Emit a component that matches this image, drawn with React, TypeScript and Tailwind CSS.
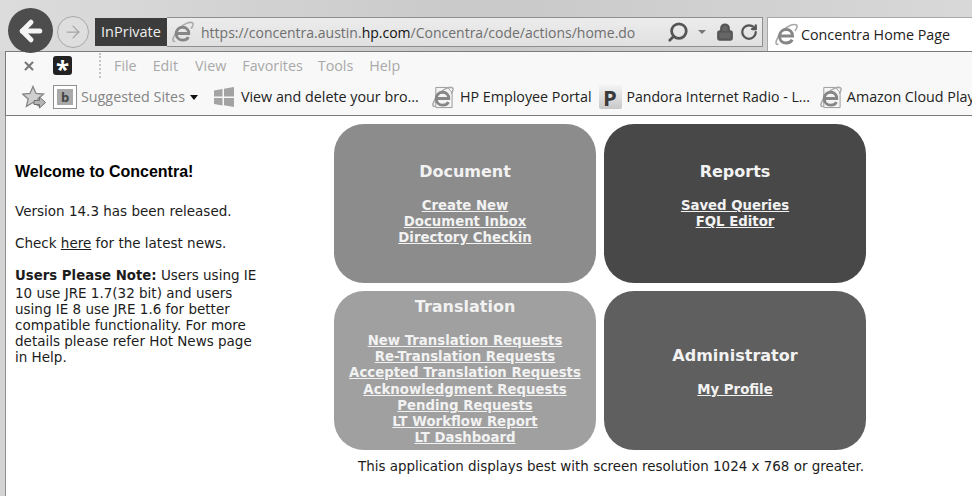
import { ArrowLeft, ArrowRight, Lock, RotateCw, Search, X } from 'lucide-react';

const chromeFont = "font-['Open_Sans','Noto_Sans',sans-serif]";
const pageFont = "font-['DejaVu_Sans',sans-serif]";

function IeIcon({ size = 24, page = false }: { size?: number; page?: boolean }) {
  return (
    <svg width={size} height={size} viewBox="0 0 24 24" fill="none" className="shrink-0">
      {page && <path d="M5 1.500h12l5 5v16H5z" fill="#f4f4f4" stroke="#9a9a9a" />}
      <path d="M4.500 21C0 23 2 15 8 8.500S20 .5 22.500 2c1.500 1-.5 4.500-1.500 6" stroke="#a9a9a9" strokeWidth="1.600" />
      <path
        d="M6 13h12.500c.2-4-2.700-6.500-6.200-6.500-4 0-6.800 3-6.800 6.800s2.800 6.700 6.800 6.700c2.700 0 4.800-1.100 5.900-3.200"
        stroke="#868686"
        strokeWidth="3"
      />
    </svg>
  );
}

function WindowsIcon() {
  return (
    <svg width="20" height="20" viewBox="0 0 20 20" fill="#a3a3a3" className="shrink-0">
      <path d="M0 3.500l8.500-1.500v7.500H0zM10 1.700L20 0v9.500H10zM0 11h8.500v7.500L0 17zM10 11h10v9l-10-1.700z" />
    </svg>
  );
}

function FavoritesIcon() {
  return (
    <svg width="24" height="24" viewBox="0 0 24 24" className="shrink-0">
      <path
        d="M11 1.500l3 7 7.500.6-5.700 4.900 1.800 7.400L11 17.500l-6.600 3.900 1.800-7.400L.5 9.100 8 8.500z"
        fill="#d0d0d0"
        stroke="#858585"
        strokeWidth="1.300"
      />
      <path d="M12 15.500h5.500V12l6 5.500-6 5.500v-3.500H12z" fill="#b5b5b5" stroke="#6f6f6f" />
    </svg>
  );
}

function Card({ title, links, bg, pad }: { title: string; links: string[]; bg: string; pad: string }) {
  return (
    <div className={`h-[159px] rounded-[30px] flex flex-col items-center text-[#f2f2f2] ${bg} ${pad}`}>
      <h2 className="h-6 leading-6 text-[16px] font-bold mb-3.5">{title}</h2>
      {links.map((link) => (
        <a key={link} className="h-[16.200px] leading-[16px] text-[13.300px] font-bold underline whitespace-nowrap">
          {link}
        </a>
      ))}
    </div>
  );
}

export default function App() {
  return (
    <div className="w-[972px] h-[496px] overflow-hidden bg-[#d4d4d4]">
      {/* Browser frame */}
      <div className={`h-[51px] flex bg-gradient-to-r from-[#dcdcdc] via-[#c9c9c9] to-[#d8d8d8] ${chromeFont}`}>
        <div className="ml-[8px] mt-[8px] w-[45px] h-[45px] rounded-full bg-[#4d4d4d] flex items-center justify-center relative z-10">
          <ArrowLeft size={30} strokeWidth={4} color="#f5f5f5" />
        </div>
        <div className="ml-[4px] mt-[16px] w-[32px] h-[32px] rounded-full border border-[#a8a8a8] bg-[#dedede] flex items-center justify-center">
          <ArrowRight size={20} strokeWidth={1.500} color="#a5a5a5" />
        </div>
        <div className="ml-[6px] mt-[18px] w-[72px] h-[28px] bg-[#3c3c3c] text-[#eeeeee] text-[14.500px] leading-[28px] text-center">
          InPrivate
        </div>
        <div className="mt-[17px] w-[596px] h-[30px] border border-l-0 border-[#8f8f8f] bg-gradient-to-b from-[#ececec] to-[#e0e0e0] flex items-center pl-[4px]">
          <IeIcon size={23} />
          <span className="ml-[7px] text-[14px] text-[#6f6f6f] whitespace-nowrap">
            https://concentra.austin.<span className="text-[#111111]">hp.com</span>/Concentra/code/actions/home.do
          </span>
          <div className="ml-auto flex items-center mr-[4px] text-[#555555]">
            <Search size={22} strokeWidth={3} className="-scale-x-100" />
            <span className="ml-[9px] border-x-[4px] border-t-[4px] border-x-transparent border-t-[#777777]" />
            <Lock size={18} strokeWidth={3} fill="#666666" className="ml-[10px]" />
            <RotateCw size={18} strokeWidth={3} className="ml-[6px]" />
          </div>
        </div>
        <div className="ml-[4px] mt-[17px] flex-1 h-[34px] bg-white border-l border-t border-[#a8a8a8] flex items-center pl-[6px] text-[14.300px] text-[#222222] whitespace-nowrap">
          <IeIcon size={24} />
          <span className="ml-[3px]">Concentra Home Page</span>
        </div>
      </div>

      <div className={`h-[65px] ml-[5px] border-y border-[#7b7b7b] border-l bg-[#f8f8f8] ${chromeFont}`}>
        <div className="h-[27px] flex items-center text-[14.300px] text-[#a9a9a9]">
          <X size={14} strokeWidth={3.500} color="#777777" className="ml-[16px]" />
          <span className="ml-[17px] w-[19px] h-[19px] rounded-[3px] bg-[#222222] text-white text-[24px] leading-[26px] text-center font-bold">
            *
          </span>
          <span className="ml-[27px] h-[25px] border-l-2 border-dotted border-[#c4c4c4]" />
          <span className="ml-[13px]">File</span>
          <span className="ml-[16px]">Edit</span>
          <span className="ml-[17px]">View</span>
          <span className="ml-[16px]">Favorites</span>
          <span className="ml-[15px]">Tools</span>
          <span className="ml-[16px]">Help</span>
        </div>
        <div className="h-[36px] flex items-center text-[14.300px] text-[#222222] whitespace-nowrap overflow-hidden">
          <span className="ml-[16px]"><FavoritesIcon /></span>
          <span className="ml-[7px] w-[24px] h-[24px] border border-[#8f8f8f] bg-white flex items-center justify-center shrink-0">
            <span className="w-[16px] h-[16px] bg-[#a9a9a9] text-[#444444] text-[13px] leading-[16px] font-bold text-center">b</span>
          </span>
          <span className="ml-[4px] text-[#858585]">Suggested Sites</span>
          <span className="ml-[5px] border-x-[4px] border-t-[5px] border-x-transparent border-t-[#111111]" />
          <span className="ml-[16px]"><WindowsIcon /></span>
          <span className="ml-[7px]">View and delete your bro...</span>
          <span className="ml-[12px]"><IeIcon size={23} page /></span>
          <span className="ml-[6px]">HP Employee Portal</span>
          <span className="ml-[7px] w-[23px] h-[24px] rounded-[2px] bg-gradient-to-b from-[#f4f4f4] to-[#c8c8c8] text-[#3a3a3a] text-[22px] leading-[24px] font-bold text-center shrink-0">
            P
          </span>
          <span className="ml-[5px] text-[14.100px]">Pandora Internet Radio - L...</span>
          <span className="ml-[9px]"><IeIcon size={23} page /></span>
          <span className="ml-[5px]">Amazon Cloud Player</span>
        </div>
      </div>

      {/* Page */}
      <div className={`ml-[5px] h-[380px] bg-white border-l border-[#8f8f8f] flex text-[#1c1c1c] ${pageFont}`}>
        <div className="w-[328px] shrink-0 pl-[9px] pt-[46px] text-[13.500px] leading-[16.200px]">
          <h1 className="font-['Liberation_Sans',sans-serif] text-[16px] font-bold leading-5 text-black">Welcome to Concentra!</h1>
          <p className="mt-[21px]">Version 14.3 has been released.</p>
          <p className="mt-[16px]">
            Check <a className="underline">here</a> for the latest news.
          </p>
          <p className="mt-[16px] w-[246px]">
            <b className="text-[13.300px]">Users Please Note:</b> Users using IE 10 use JRE 1.7(32 bit) and users using IE 8 use JRE 1.6 for better compatible functionality. For more details please refer Hot News page in Help.
          </p>
        </div>
        <div className="pt-[8px]">
          <div className="grid grid-cols-[262px_262px] gap-2">
            <Card title="Document" links={['Create New', 'Document Inbox', 'Directory Checkin']} bg="bg-[#8c8c8c]" pad="pt-[36px]" />
            <Card title="Reports" links={['Saved Queries', 'FQL Editor']} bg="bg-[#484848]" pad="pt-[36px]" />
            <Card
              title="Translation"
              links={[
                'New Translation Requests',
                'Re-Translation Requests',
                'Accepted Translation Requests',
                'Acknowledgment Requests',
                'Pending Requests',
                'LT Workflow Report',
                'LT Dashboard',
              ]}
              bg="bg-[#a0a0a0]"
              pad="pt-[4px]"
            />
            <Card title="Administrator" links={['My Profile']} bg="bg-[#5f5f5f]" pad="pt-[53px]" />
          </div>
          <p className="mt-[9px] pl-[22px] text-[13.450px] leading-4 text-center text-[#1c1c1c] whitespace-nowrap">
            This application displays best with screen resolution 1024 x 768 or greater.
          </p>
        </div>
      </div>
    </div>
  );
}
